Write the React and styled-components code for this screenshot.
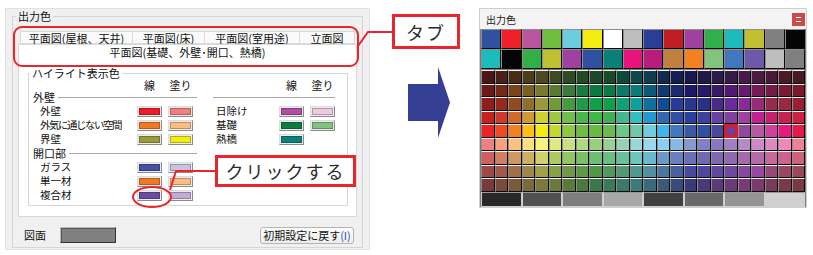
import React from "react";
import styled, { createGlobalStyle } from "styled-components";

const GlobalStyle = createGlobalStyle`
  html, body { margin: 0; padding: 0; background: #fff; }
  body { font-family: "Noto Sans CJK JP", "Noto Sans", sans-serif; color: #111; }
`;

const Stage = styled.div`
  position: relative;
  width: 813px;
  height: 255px;
  display: flex;
  align-items: flex-start;
  padding: 8px 0 0 5px;
  box-sizing: border-box;
  overflow: hidden;
`;

/* ---------- left dialog ---------- */

const Dialog = styled.div`
  width: 365px;
  height: 242px;
  box-sizing: border-box;
  background: #f0f0f0;
  border: 1px solid #e2e2e2;
  padding: 1px 6px 0 6px;
`;

const Group = styled.fieldset`
  margin: 0;
  min-width: 0;
  box-sizing: border-box;
  border: 1px solid #d5d5d5;
  padding: ${(p) => p.$pad};
  height: ${(p) => p.$h}px;
`;

const Legend = styled.legend`
  font-size: 11px;
  line-height: 12px;
  padding: 0 2px;
  margin-left: ${(p) => p.$ml}px;
`;

const TabRow = styled.div`
  display: flex;
  margin: 0 ${(p) => p.$inset}px;
  height: ${(p) => p.$h}px;
`;

const Tab = styled.div`
  width: ${(p) => (p.$w ? p.$w + "px" : "auto")};
  flex: ${(p) => (p.$w ? "none" : "1")};
  box-sizing: border-box;
  border: 1px solid #d9d9d9;
  border-right-width: ${(p) => (p.$last ? 1 : 0)}px;
  border-bottom: ${(p) => (p.$active ? "none" : "1px solid #d9d9d9")};
  background: ${(p) => (p.$active ? "#fff" : "#fafafa")};
  font-size: 11px;
  line-height: 12px;
  display: flex;
  align-items: center;
  justify-content: center;
  white-space: nowrap;
`;

const TabPage = styled.div`
  height: 159px;
  box-sizing: border-box;
  border: 1px solid #d9d9d9;
  border-top: none;
  background: #fff;
  padding: 9px 8px 0 9px;
`;

const Columns = styled.div`
  display: grid;
  grid-template-columns: 164px 122px;
  column-gap: 16px;
  padding-left: 4px;
`;

const Col = styled.div`
  display: flex;
  flex-direction: column;
`;

const Line = styled.div`
  display: grid;
  grid-template-columns: minmax(0, 1fr) 25px 25px;
  column-gap: 6px;
  align-items: center;
  height: ${(p) => p.$h}px;
  font-size: 11px;
  line-height: 12px;
  padding-right: ${(p) => p.$pr || 0}px;
`;

const HeadLabel = styled.span`
  text-align: center;
  white-space: nowrap;
`;

const Section = styled.div`
  display: flex;
  align-items: center;
  gap: 3px;
  height: 14px;
  font-size: 11px;
  line-height: 12px;
  &::after {
    content: "";
    flex: 1;
    border-top: 1px solid #a8a8a8;
    margin-top: 1px;
  }
`;

const ItemLabel = styled.span`
  display: block;
  padding-left: ${(p) => p.$indent}px;
  white-space: nowrap;
  letter-spacing: ${(p) => (p.$tight ? "-1.5px" : "0")};
  font-size: 10.5px;
  line-height: 12px;
  height: 12px;
  overflow: visible;
`;

const Swatch = styled.div`
  width: 25px;
  height: 11px;
  box-sizing: border-box;
  border: 1px solid;
  border-color: #dcdcdc #8a8a8a #8a8a8a #dcdcdc;
  background: #ececec;
  padding: 1px;
  &::before {
    content: "";
    display: block;
    height: 100%;
    background: ${(p) => p.$c};
    box-shadow: inset 0 0 0 1px rgba(0, 0, 0, 0.25);
  }
`;

const Bottom = styled.div`
  display: flex;
  align-items: center;
  margin-top: 10px;
  height: 16px;
  font-size: 11px;
  line-height: 12px;
`;

const BottomLabel = styled.span`
  margin-left: 6px;
  width: 36px;
`;

const WideSwatch = styled.div`
  width: 56px;
  height: 16px;
  box-sizing: border-box;
  border: 1px solid #333;
  border-top-color: #bbb;
  border-left-color: #bbb;
  background: #808080;
  box-shadow: inset 1px 1px 0 #555;
`;

const ResetButton = styled.div`
  margin-left: auto;
  margin-right: 3px;
  width: 94px;
  height: 17px;
  box-sizing: border-box;
  border: 1px solid #b4b4b4;
  border-radius: 3px;
  background: linear-gradient(#fcfcfc, #ededed);
  display: flex;
  align-items: center;
  justify-content: center;
  font-size: 11px;
  white-space: nowrap;
`;

const Mnemonic = styled.span`
  color: #2b55b5;
`;

/* ---------- arrow ---------- */

const ArrowBox = styled.div`
  margin: 59px 0 0 38px;
  width: 42px;
  height: 71px;
  flex: none;
`;

/* ---------- palette window ---------- */

const Palette = styled.div`
  margin-left: 29px;
  width: 328px;
  height: 200px;
  box-sizing: border-box;
  border: 1px solid #cfcfcf;
  background: #f3f3f3;
  display: flex;
  flex-direction: column;
  flex: none;
`;

const TitleBar = styled.div`
  height: 20px;
  display: flex;
  align-items: center;
  padding: 0 1px 0 6px;
  font-size: 10px;
  color: #222;
`;

const CloseBtn = styled.div`
  margin-left: auto;
  width: 13px;
  height: 13px;
  background: #c94b4b;
  display: flex;
  align-items: center;
  justify-content: center;
  &::before {
    content: "";
    width: 5px;
    height: 3px;
    border-top: 1px solid #fff;
    border-bottom: 1px solid #fff;
  }
`;

const Swatches = styled.div`
  background: #7a7a7a;
  padding: 0 1px 0 1px;
  display: flex;
  flex-direction: column;
`;

const Grid = styled.div`
  display: grid;
  grid-template-columns: repeat(${(p) => p.$cols}, 1fr);
  grid-auto-rows: ${(p) => p.$rowH}px;
  width: 324px;
  margin-top: ${(p) => p.$mt || 0}px;
`;

const Cell = styled.div`
  box-sizing: border-box;
  background: ${(p) => p.$c};
  border: 1px solid;
  border-color: ${(p) => p.$top} #0a0a0a #0a0a0a #8e8e8e;
  box-shadow: ${(p) => (p.$sel ? "inset 0 0 0 2px #d01f25" : "none")};
  ${(p) => (p.$sel ? "border-color: #d01f25;" : "")}
`;

const GrayCell = styled.div`
  box-sizing: border-box;
  background: ${(p) => p.$c};
  border: 1px solid #cfcfcf;
  border-top-color: #999;
`;

/* ---------- annotations ---------- */

const Overlay = styled.svg`
  position: absolute;
  left: 0;
  top: 0;
  pointer-events: none;
`;

const Callout = styled.div`
  position: absolute;
  left: ${(p) => p.$x}px;
  top: ${(p) => p.$y}px;
  width: ${(p) => p.$w}px;
  height: ${(p) => p.$h}px;
  box-sizing: border-box;
  border: 3px solid #e8262c;
  background: #fff;
  display: flex;
  align-items: center;
  justify-content: center;
  font-size: 18px;
  letter-spacing: 2px;
  color: #2a2a2a;
`;

/* ---------- data ---------- */

const leftRows = [
  { section: "外壁" },
  { label: "外壁", line: "#ee1c24", fill: "#f08080" },
  { label: "外気に通じない空間", tight: true, line: "#f07a20", fill: "#fbbd80" },
  { label: "界壁", line: "#9a9a38", fill: "#f2ec10" },
  { section: "開口部" },
  { label: "ガラス", line: "#4552a4", fill: "#cbc2e2" },
  { label: "単一材", line: "#f07a20", fill: "#fbbd80" },
  { label: "複合材", line: "#6b4c9e", fill: "#c4aad8" },
];

const rightRows = [
  { label: "日除け", line: "#b04ea0", fill: "#f0c8e2" },
  { label: "基礎", line: "#0e7c3e", fill: "#80c282" },
  { label: "熱橋", line: "#0e807c" },
];

const big = [
  ["#3050a0", "#f0202a", "#b8559c", "#70be40", "#6ccce0", "#f5ec10", "#ffffff", "#bebebe",
   "#2a3e98", "#c01c24", "#a040a0", "#30b048", "#1cbcbc", "#c0c030", "#808080", "#050505"],
  ["#1cbcbc", "#050505", "#30b048", "#c0c030", "#a040a0", "#3050a0", "#0a8078", "#e8147c",
   "#b81c7c", "#c08040", "#f58020", "#80c480", "#4078c0", "#7058a8", "#bebebe", "#808080"],
];

const small = [
  ["#4a1616","#4a2016","#4a2c14","#4a3e18","#4a4a1e","#3e4a20","#2e4a22","#224a24","#1c4a28","#184a2a","#0e4a38","#0e4848",
   "#0e3c50","#102a50","#141e50","#181850","#201a4a","#2a1a4a","#381a4a","#461a4a","#4a1a40","#4a1a34","#4a1a28","#4a1820"],
  ["#701818","#782818","#7a4518","#7a6020","#7a7a2a","#5a7a30","#3a7a3a","#1a7a40","#0a7a40","#0a7a48","#0a7a68","#0a7a7a",
   "#0a5a7a","#103a70","#1a2a70","#1a1a68","#281a68","#381a68","#501a70","#681a70","#781a58","#781a48","#781a38","#781828"],
  ["#901c1c","#98281c","#904a20","#907028","#9a9a38","#709a38","#489a40","#209a48","#10a048","#10a04a","#10a078","#10a0a0",
   "#1070a0","#104a90","#283a98","#283890","#283088","#482a88","#6a2a98","#8a2a98","#982a78","#982a50","#982840","#982030"],
  ["#c82020","#d03828","#d06a28","#d09a30","#d0d030","#9ec840","#70c048","#48b848","#40b848","#40b050","#40b890","#30c0c0",
   "#2098d0","#3068b0","#3050a8","#2840a0","#4040a0","#6840a0","#8040a0","#a040a0","#c02090","#c82070","#c82050","#d02040"],
  ["#f02028","#f04a20","#f58020","#ffc010","#f5ec10","#c5d830","#90c840","#70be40","#68ba40","#6abb4a","#6ac888","#70c8a8",
   "#70cce0","#38b8ec","#4078c0","#3a5aa8","#3050a0","#4848a0","#7040a0","#9048a0","#b858a0","#d040a0","#e8187c","#e81848"],
  ["#f08080","#f8a080","#fcc080","#fce080","#f8f080","#e0e880","#c8e080","#b0d880","#98d080","#98d098","#98d0b8","#98d8d8",
   "#98d8f0","#88d0f8","#88b8e8","#8898d0","#8080c8","#8878c0","#a080c0","#b888c8","#d088c8","#e088c0","#f088b8","#f08098"],
  ["#d06060","#d08060","#d09860","#d0b060","#d0d070","#b0c860","#90c860","#78c060","#68c070","#68c080","#68c0a0","#68c8c0",
   "#68b8d0","#6898c8","#6880c0","#6870b8","#7068b0","#8068b0","#9068b0","#a868b0","#b868a8","#c86898","#d06090","#d06078"],
  ["#a04848","#a05848","#a07048","#a08848","#a0a048","#88a048","#709848","#609848","#509848","#509860","#509878","#509890",
   "#5090a0","#4878a0","#4860a0","#4848a0","#5048a0","#6048a0","#7048a0","#8848a0","#9848a0","#984878","#984860","#984858"],
  ["#7a3a3a","#7a4a3a","#7a5a3a","#7a6a3a","#7a7a3a","#6a7a3a","#5a7a3a","#4a7a3a","#3a7a4a","#3a7a5a","#3a7a6a","#3a7a7a",
   "#3a6a7a","#3a5a7a","#3a4a7a","#3a3a7a","#4a3a7a","#5a3a7a","#6a3a7a","#7a3a7a","#7a3a6a","#7a3a5a","#7a3a4a","#7a3a44"],
];

const grays = ["#282828", "#505050", "#7e7e7e", "#a8a8a8", "#404040", "#686868", "#949494", "#d0d0d0"];

function Rows({ rows, pr }) {
  return rows.map((r, i) =>
    r.section ? (
      <Section key={i}>{r.section}</Section>
    ) : (
      <Line key={i} $h={14} $pr={pr}>
        <ItemLabel $indent={pr ? 7 : 3} $tight={r.tight}>{r.label}</ItemLabel>
        <Swatch $c={r.line} />
        {r.fill ? <Swatch $c={r.fill} /> : <span />}
      </Line>
    )
  );
}

export default function App() {
  return (
    <Stage>
      <GlobalStyle />
      <Dialog>
        <Group $pad="9px 5px 3px 5px" $h={238}>
          <Legend $ml={-2}>出力色</Legend>
          <TabRow $inset={2} $h={13}>
            <Tab $w={112}>平面図(屋根、天井)</Tab>
            <Tab $w={72}>平面図(床)</Tab>
            <Tab $w={95}>平面図(室用途)</Tab>
            <Tab $last>立面図</Tab>
          </TabRow>
          <TabRow $inset={0} $h={14}>
            <Tab $active $last>平面図(基礎、外壁･開口、熱橋)</Tab>
          </TabRow>
          <TabPage>
            <Group $pad="0 0 0 0" $h={139}>
              <Legend $ml={1}>ハイライト表示色</Legend>
              <Columns>
                <Col>
                  <Line $h={11} $pr={4}>
                    <span />
                    <HeadLabel>線</HeadLabel>
                    <HeadLabel>塗り</HeadLabel>
                  </Line>
                  <Rows rows={leftRows} pr={4} />
                </Col>
                <Col>
                  <Line $h={11}>
                    <span />
                    <HeadLabel>線</HeadLabel>
                    <HeadLabel>塗り</HeadLabel>
                  </Line>
                  <Section />
                  <Rows rows={rightRows} />
                </Col>
              </Columns>
            </Group>
          </TabPage>
          <Bottom>
            <BottomLabel>図面</BottomLabel>
            <WideSwatch />
            <ResetButton>
              初期設定に戻す<Mnemonic>(I)</Mnemonic>
            </ResetButton>
          </Bottom>
        </Group>
      </Dialog>

      <ArrowBox>
        <svg width="42" height="71" viewBox="0 0 42 71">
          <polygon points="0,17 30,17 30,0 42,35.5 30,71 30,54 0,54" fill="#343f93" />
        </svg>
      </ArrowBox>

      <Palette>
        <TitleBar>
          出力色
          <CloseBtn />
        </TitleBar>
        <Swatches>
          <Grid $cols={16} $rowH={20}>
            {big.flat().map((c, i) => (
              <Cell key={i} $c={c} $top="#8e8e8e" />
            ))}
          </Grid>
          <Grid $cols={24} $rowH={13.5} $mt={1}>
            {small.flat().map((c, i) => (
              <Cell key={i} $c={c} $top="#f4f4f4" $sel={i === 4 * 24 + 18} />
            ))}
          </Grid>
          <Grid $cols={8} $rowH={15}>
            {grays.map((c, i) => (
              <GrayCell key={i} $c={c} />
            ))}
          </Grid>
        </Swatches>
      </Palette>

      <Overlay width="813" height="255">
        <rect x="14" y="27" width="344" height="39" rx="8" fill="none" stroke="#e8262c" strokeWidth="2" />
        <polyline points="358,46 368,32 393,32" fill="none" stroke="#e8262c" strokeWidth="2" />
        <ellipse cx="152" cy="197" rx="19" ry="10" fill="none" stroke="#e8262c" strokeWidth="2" />
        <polyline points="170,190 176,171 216,171" fill="none" stroke="#e8262c" strokeWidth="2" />
      </Overlay>
      <Callout $x={392} $y={14} $w={68} $h={35}>タブ</Callout>
      <Callout $x={215} $y={155} $w={141} $h={32}>クリックする</Callout>
    </Stage>
  );
}
